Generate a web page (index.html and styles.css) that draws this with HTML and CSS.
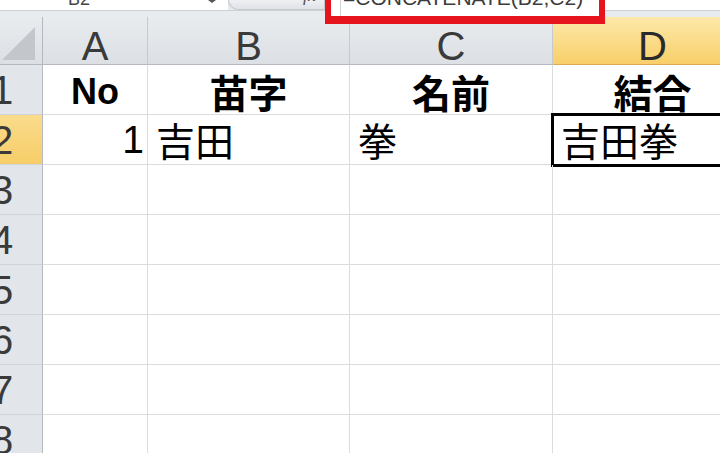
FILE: index.html
```html
<!DOCTYPE html>
<html lang="ja">
<head>
<meta charset="utf-8">
<title>CONCATENATE</title>
<link rel="stylesheet" href="styles.css">
</head>
<body>
<div class="fbar">
  <div class="namebox"><span class="nb-txt">B2</span><span class="arrow"></span></div>
  <div class="fxtab"><span class="fx">fx</span></div>
  <div class="formula"></div>
</div>
<div class="band"></div>
<div class="sheet">
  <div class="corner"><svg width="33" height="33" viewBox="0 0 33 33"><polygon points="33,0 33,33 0,33" fill="#c3c7cc"/></svg></div>
  <div class="hd">A</div>
  <div class="hd">B</div>
  <div class="hd">C</div>
  <div class="hd sel">D</div>

  <div class="rh">1</div>
  <div class="c head latin">No</div>
  <div class="c head">苗字</div>
  <div class="c head">名前</div>
  <div class="c head">結合</div>

  <div class="rh sel">2</div>
  <div class="c num">1</div>
  <div class="c">吉田</div>
  <div class="c">拳</div>
  <div class="c active">吉田拳</div>

  <div class="rh">3</div><div class="c"></div><div class="c"></div><div class="c"></div><div class="c"></div>
  <div class="rh">4</div><div class="c"></div><div class="c"></div><div class="c"></div><div class="c"></div>
  <div class="rh">5</div><div class="c"></div><div class="c"></div><div class="c"></div><div class="c"></div>
  <div class="rh">6</div><div class="c"></div><div class="c"></div><div class="c"></div><div class="c"></div>
  <div class="rh">7</div><div class="c"></div><div class="c"></div><div class="c"></div><div class="c"></div>
  <div class="rh">8</div><div class="c"></div><div class="c"></div><div class="c"></div><div class="c"></div>
</div>
<div class="callout"><span class="ftxt">=CONCATENATE(B2,C2)</span></div>
</body>
</html>
```
FILE: styles.css
```css
* { box-sizing: border-box; }
html, body { margin: 0; padding: 0; }
body {
  width: 720px;
  height: 453px;
  overflow: hidden;
  position: relative;
  background: #fff;
  font-family: "Liberation Sans", "Noto Sans CJK JP", sans-serif;
}

/* formula bar (cropped at top) */
.fbar {
  display: flex;
  height: 11px;
  background: #e6e9ec;
  border-bottom: 1px solid #cdd1d5;
}
.namebox {
  width: 228px;
  background: #fff;
  overflow: hidden;
  display: flex;
  justify-content: space-between;
  align-items: flex-start;
  padding-left: 68px;
  padding-right: 12px;
  font-size: 18px;
  line-height: 18px;
  color: #444;
}
.nb-txt { display: block; margin-top: -10px; }
.arrow {
  width: 0;
  height: 0;
  border-left: 4px solid transparent;
  border-right: 4px solid transparent;
  border-top: 3px solid #555;
}
.fxtab {
  width: 97px;
  background: linear-gradient(#eef0f2, #e0e3e7);
  border: 1px solid #c4c8cd;
  border-top: 0;
  border-bottom-left-radius: 12px;
  display: flex;
  justify-content: flex-end;
  align-items: flex-start;
  overflow: hidden;
  padding-right: 8px;
  font-family: "Liberation Serif", serif;
  font-style: italic;
  font-size: 18px;
  line-height: 18px;
  color: #555;
}
.fx { display: block; margin-top: -14px; }
.formula { flex: 1; background: #fff; }
.band { height: 6px; background: #e9ecef; }

/* sheet grid */
.sheet {
  display: grid;
  grid-template-columns: 81px 105px 202px 203px 200px;
  grid-template-rows: 48px repeat(8, 50px);
  margin-left: -38px;
}
.corner {
  background: linear-gradient(#e9ecef, #dcdfe3);
  border-right: 1px solid #b5b9bf;
  border-bottom: 1px solid #b5b9bf;
  display: flex;
  justify-content: flex-end;
  align-items: flex-end;
  padding: 0 7px 4px 0;
}
.corner svg { display: block; }
.hd {
  background: linear-gradient(#e9ecef, #dcdfe3);
  border-right: 1px solid #c6cad0;
  border-bottom: 1px solid #b5b9bf;
  display: flex;
  align-items: center;
  justify-content: center;
  padding-top: 10px;
  font-size: 40px;
  line-height: 1;
  color: #3a3a3a;
}
.hd.sel {
  background: linear-gradient(#fde9a9, #f8cf6a);
  border-bottom-color: #d9ad4f;
  color: #2a2a2a;
}
.rh {
  background: #e2e5e9;
  border-right: 1px solid #b5b9bf;
  border-bottom: 1px solid #cfd3d8;
  display: flex;
  align-items: center;
  justify-content: center;
  font-size: 40px;
  line-height: 1;
  color: #3a3a3a;
}
.rh.sel { background: linear-gradient(#fbdc8c, #f6cd68); }
.c {
  border-right: 1px solid #dadcdd;
  border-bottom: 1px solid #dadcdd;
  display: flex;
  align-items: center;
  padding: 0 8px;
  font-family: "Noto Sans CJK JP", sans-serif;
  font-size: 39px;
  line-height: 1;
  color: #000;
  white-space: nowrap;
}
.c.head { justify-content: center; font-weight: bold; padding-top: 4px; }
.c.latin { font-family: "Liberation Sans", sans-serif; font-size: 36px; }
.c.num {
  justify-content: flex-end;
  padding-right: 3px;
  font-family: "Liberation Sans", sans-serif;
  font-size: 39px;
}
.c.active { outline: 3px solid #000; outline-offset: -1px; }

/* red annotation box over the formula bar */
.callout {
  position: absolute;
  left: 325px;
  top: -6px;
  width: 280px;
  height: 30px;
  border: 6px solid #e5141d;
  border-bottom-width: 8px;
  background: linear-gradient(#fff 0 17px, #e9ecef 17px);
  overflow: hidden;
  padding-left: 9px;
  font-size: 21px;
  line-height: 21px;
  color: #3c3c3c;
}
.ftxt {
  display: block;
  margin-top: -13px;
  border-left: 1px solid #cfd2d6;
  padding-left: 2px;
  height: 30px;
}
```
